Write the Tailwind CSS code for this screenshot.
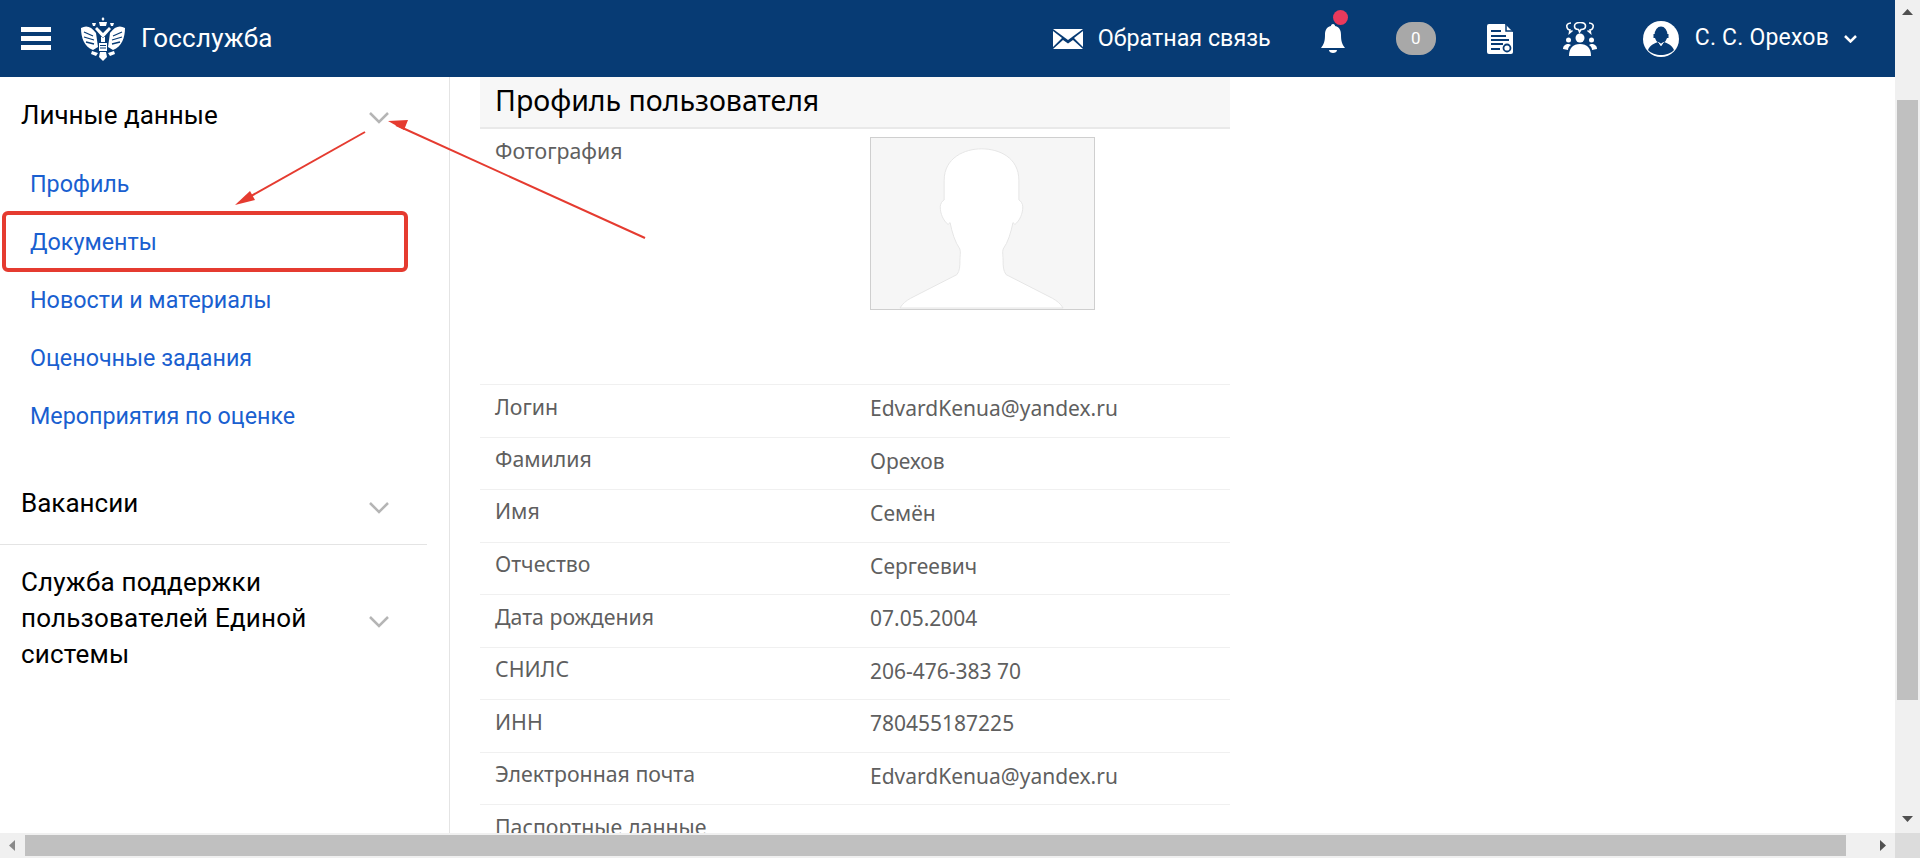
<!DOCTYPE html>
<html lang="ru">
<head>
  <meta charset="UTF-8" />
  <title>Госслужба - Профиль пользователя</title>
  <script src="https://cdn.jsdelivr.net/npm/@tailwindcss/browser@4"></script>
</head>
<body class="bg-white h-screen overflow-hidden font-['Roboto',sans-serif]">
  <div class="relative h-[858px] flex flex-col">
    <div class="flex flex-1 min-h-0">
      <div class="flex-1 flex flex-col min-w-0">
        <!-- header -->
        <header class="h-[77px] shrink-0 bg-[#073b74] flex items-center text-white">
          <div class="ml-[21px] w-[30px] flex flex-col gap-[4px]">
            <span class="block h-[5px] bg-white"></span>
            <span class="block h-[5px] bg-white"></span>
            <span class="block h-[5px] bg-white"></span>
          </div>
          <svg class="ml-[30px] w-[44px] h-[44px]" viewBox="0 0 44 44">
            <path d="M15 16C10 9 5 8 0 11c0 9 3 19 12 22l5-3zM29 16c5-7 10-8 15-5 0 9-3 19-12 22l-5-3z" fill="white"/>
            <path d="M3 15l9 4M3 20l10 3M5 25l8 2M41 15l-9 4M41 20l-10 3M39 25l-8 2" stroke="#073b74" stroke-width="1.300" fill="none"/>
            <path d="M14 12l8 9 8-9-2-2-6 6-6-6zM20 20h4v5h-4z" fill="white"/>
            <path d="M22 0l1.500 2-1.500 2-1.500-2zM18 5h8l-1 4h-6zM11 6h4l-1 3h-2zM29 6h4l-1 3h-2z" fill="white"/>
            <path d="M18 26h8v8h-8z" fill="white"/>
            <path d="M19 28.500h6M19 31h6" stroke="#073b74" stroke-width="1"/>
            <path d="M19 35h6l1 5-4 4-4-4zM11 34l6 2-2 3-5-2zM33 34l-6 2 2 3 5-2z" fill="white"/>
          </svg>
          <span class="ml-[16px] text-[26px] tracking-[0.2px]">Госслужба</span>

          <div class="ml-auto flex items-center">
            <svg class="w-[30px] h-[20px]" viewBox="0 0 30 20">
              <path d="M0 0h30L15 11z" fill="white"/>
              <path d="M0 2v16l9-9zM30 2v16l-9-9z" fill="white"/>
              <path d="M0 20l10-9 5 3.500 5-3.500 10 9z" fill="white"/>
            </svg>
            <span class="ml-[15px] text-[23.300px] w-[172px] whitespace-nowrap">Обратная связь</span>

            <div class="relative ml-[51px] w-[24px] h-[30px]">
              <svg class="w-[24px] h-[30px]" viewBox="0 0 24 30" fill="white">
                <path d="M12 0c1.500 0 2 1 2 2 5 1 6 5 6 9 0 6 1 9 4 13H0c3-4 4-7 4-13 0-4 1-8 6-9 0-1 .5-2 2-2z"/>
                <path d="M8 26h8c0 2-2 3-4 3s-4-1-4-3z"/>
              </svg>
              <span class="absolute -top-[14px] left-[12px] w-[15px] h-[15px] rounded-full bg-[#ea3a5c]"></span>
            </div>

            <span class="ml-[51px] w-[40px] h-[33px] rounded-[16px] bg-[#a8a8a8] flex items-center justify-center text-[17px]">0</span>

            <svg class="ml-[51px] w-[26px] h-[30px]" viewBox="0 0 26 30">
              <path d="M2 0h16l8 8v20a2 2 0 0 1-2 2H2a2 2 0 0 1-2-2V2a2 2 0 0 1 2-2z" fill="white"/>
              <path d="M19 0v7h7" fill="none" stroke="#073b74" stroke-width="1.500"/>
              <path d="M4 7h10M4 12h15M4 16h18M4 20h12M4 25h9" stroke="#073b74" stroke-width="1.800"/>
              <circle cx="20" cy="24" r="3.500" fill="white" stroke="#073b74" stroke-width="1.800"/>
            </svg>

            <svg class="ml-[50px] w-[34px] h-[34px]" viewBox="0 0 34 34" fill="white">
              <circle cx="17" cy="16" r="4.500"/>
              <path d="M6 34c0-8 4-12 11-12s11 4 11 12z"/>
              <circle cx="5.500" cy="18" r="2.500"/>
              <circle cx="28.500" cy="18" r="2.500"/>
              <path d="M0 27c0-3 2-5 6-5l2 1c-2 1-3 3-3 5zM34 27c0-3-2-5-6-5l-2 1c2 1 3 3 3 5z"/>
              <path d="M11.500 4c0-2.500 3-3.500 5.500-3.500s5.500 1 5.500 3.500-2.500 3.500-4.500 3.500l-1.500 2.500-1-2.500c-2 0-4-1-4-3.500z" fill="none" stroke="white" stroke-width="1.600"/>
              <path d="M8 1C5 1 3 3 4 5.500 4.500 7 6 8 7 8l-.5 3 3-2.500M26 1c3 0 5 2 4 4.500C29.500 7 28 8 27 8l.5 3-3-2.500" fill="none" stroke="white" stroke-width="1.600"/>
            </svg>

            <svg class="ml-[46px] w-[36px] h-[36px]" viewBox="0 0 36 36">
              <circle cx="18" cy="18" r="18" fill="white"/>
              <ellipse cx="18" cy="14" rx="6.500" ry="8.500" fill="#073b74"/>
              <path d="M10.500 13h1.500v4h-1.500zM24 13h1.500v4H24z" fill="#073b74"/>
              <path d="M5 29c2-5 7-7 10-8l3 4 3-4c3 1 8 3 10 8-3 3.500-8 5-13 5S8 32.500 5 29z" fill="#073b74"/>
              <path d="M15.500 21l2.500 3.500 2.500-3.500" fill="none" stroke="white" stroke-width="1"/>
            </svg>

            <span class="ml-[16px] text-[23px] tracking-[0.2px] whitespace-nowrap">С. С. Орехов</span>
            <svg class="ml-[15px] mr-[38px] w-[13px] h-[8px]" viewBox="0 0 13 8" fill="none" stroke="white" stroke-width="2.500">
              <path d="M1 1l5.500 5.500L12 1"/>
            </svg>
          </div>
        </header>

        <div class="flex flex-1 min-h-0">
          <!-- sidebar -->
          <aside class="w-[450px] shrink-0 border-r border-[#e4e4e4] overflow-hidden">
            <div class="w-[427px]">
              <div class="h-[76px] pl-[21px] pr-[38px] flex items-center justify-between text-[26px] text-black">
                <span>Личные данные</span>
                <svg class="w-[20px] h-[12px] mt-[6px]" viewBox="0 0 20 12" fill="none" stroke="#b5b5b5" stroke-width="2.500"><path d="M1 1l9 9 9-9"/></svg>
              </div>
              <nav class="flex flex-col pl-[30px] pt-[2px] pb-[20px] text-[23.300px] text-[#1a5fd0]">
                <a class="h-[58px] flex items-center">Профиль</a>
                <a class="h-[58px] flex items-center">Документы</a>
                <a class="h-[58px] flex items-center">Новости и материалы</a>
                <a class="h-[58px] flex items-center">Оценочные задания</a>
                <a class="h-[58px] flex items-center">Мероприятия по оценке</a>
              </nav>
              <div class="h-[80px] pl-[21px] pr-[38px] flex items-center justify-between text-[26px] text-black border-b border-[#e4e4e4]">
                <span class="mb-[2px]">Вакансии</span>
                <svg class="w-[20px] h-[12px] mt-[6px]" viewBox="0 0 20 12" fill="none" stroke="#b5b5b5" stroke-width="2.500"><path d="M1 1l9 9 9-9"/></svg>
              </div>
              <div class="pt-[19px] pl-[21px] pr-[38px] flex items-center justify-between text-[26px] leading-[36px] text-black tracking-[0.2px]">
                <span class="w-[320px]">Служба поддержки пользователей Единой системы</span>
                <svg class="w-[20px] h-[12px] mt-[8px]" viewBox="0 0 20 12" fill="none" stroke="#b5b5b5" stroke-width="2.500"><path d="M1 1l9 9 9-9"/></svg>
              </div>
            </div>
          </aside>

          <!-- content -->
          <main class="flex-1 min-w-0 overflow-hidden pl-[30px] font-['Noto_Sans',sans-serif]">
            <div class="w-[750px]">
              <h1 class="h-[52px] px-[15px] pb-[4px] flex items-center bg-[#f7f7f7] border-b-2 border-[#e9e9e9] text-[28.500px] text-black">Профиль пользователя</h1>
              <div class="h-[256px] flex border-b border-[#f0f0f0]">
                <div class="w-[390px] pl-[15px] pt-[6px] text-[21.300px] text-[#5f5f5f]">Фотография</div>
                <svg class="mt-[8px] w-[225px] h-[173px] bg-[#f6f6f6] border border-[#cfcfcf]" viewBox="0 0 226 174" fill="white" stroke="#e6e6e6" stroke-width="1">
                  <path d="M29 173C32 168 35 166 40 163L87 139C90 135 90 130 90 125C90 120 91 117 90 113C85 106 82 96 80 86L78 88C73 84 70 77 70 70C70 67 72 64 74 63L74 43C74 20 95 11 112 11C130 11 150 20 150 43L150 63C152 64 154 67 154 70C154 77 151 84 146 88L144 86C142 96 139 106 134 113C133 117 134 120 134 125C134 130 134 135 137 139L184 163C189 166 192 168 195 173Z"/>
                </svg>
              </div>
              <dl>
                <div class="h-[53px] flex border-b border-[#f0f0f0]"><dt class="w-[390px] pl-[15px] pt-[6px] text-[21.300px] text-[#5f5f5f]">Логин</dt><dd class="pt-[8px] text-[21px] text-[#5f5f5f]">EdvardKenua@yandex.ru</dd></div>
                <div class="h-[52px] flex border-b border-[#f0f0f0]"><dt class="w-[390px] pl-[15px] pt-[5px] text-[21.300px] text-[#5f5f5f]">Фамилия</dt><dd class="pt-[8px] text-[21px] text-[#5f5f5f]">Орехов</dd></div>
                <div class="h-[53px] flex border-b border-[#f0f0f0]"><dt class="w-[390px] pl-[15px] pt-[5px] text-[21.300px] text-[#5f5f5f]">Имя</dt><dd class="pt-[8px] text-[21px] text-[#5f5f5f]">Семён</dd></div>
                <div class="h-[52px] flex border-b border-[#f0f0f0]"><dt class="w-[390px] pl-[15px] pt-[5px] text-[21.300px] text-[#5f5f5f]">Отчество</dt><dd class="pt-[8px] text-[21px] text-[#5f5f5f]">Сергеевич</dd></div>
                <div class="h-[53px] flex border-b border-[#f0f0f0]"><dt class="w-[390px] pl-[15px] pt-[6px] text-[21.300px] text-[#5f5f5f]">Дата рождения</dt><dd class="pt-[8px] text-[21px] text-[#5f5f5f]">07.05.2004</dd></div>
                <div class="h-[52px] flex border-b border-[#f0f0f0]"><dt class="w-[390px] pl-[15px] pt-[5px] text-[21.300px] text-[#5f5f5f]">СНИЛС</dt><dd class="pt-[8px] text-[21px] text-[#5f5f5f]">206-476-383 70</dd></div>
                <div class="h-[53px] flex border-b border-[#f0f0f0]"><dt class="w-[390px] pl-[15px] pt-[6px] text-[21.300px] text-[#5f5f5f]">ИНН</dt><dd class="pt-[8px] text-[21px] text-[#5f5f5f]">780455187225</dd></div>
                <div class="h-[52px] flex border-b border-[#f0f0f0]"><dt class="w-[390px] pl-[15px] pt-[5px] text-[21.300px] text-[#5f5f5f]">Электронная почта</dt><dd class="pt-[8px] text-[21px] text-[#5f5f5f]">EdvardKenua@yandex.ru</dd></div>
                <div class="h-[53px] flex"><dt class="w-[390px] pl-[15px] pt-[6px] text-[21.300px] text-[#5f5f5f]">Паспортные данные</dt></div>
              </dl>
            </div>
          </main>
        </div>
      </div>

      <!-- vertical scrollbar -->
      <div class="w-[25px] shrink-0 bg-[#f0f0f0] flex flex-col items-center">
        <svg class="mt-[9px] w-[11px] h-[6px]" viewBox="0 0 11 6" fill="#505050"><path d="M5.500 0L11 6H0z"/></svg>
        <div class="mt-[85px] w-[21px] h-[600px] bg-[#c0c0c0]"></div>
        <svg class="mt-auto mb-[11px] w-[11px] h-[6px]" viewBox="0 0 11 6" fill="#505050"><path d="M0 0h11L5.500 6z"/></svg>
      </div>
    </div>

    <!-- horizontal scrollbar -->
    <div class="h-[25px] shrink-0 bg-[#f0f0f0] flex items-center">
      <svg class="ml-[9px] w-[6px] h-[11px]" viewBox="0 0 6 11" fill="#8a8a8a"><path d="M6 0v11L0 5.500z"/></svg>
      <div class="ml-[10px] w-[1821px] h-[21px] bg-[#c0c0c0]"></div>
      <svg class="ml-[34px] w-[6px] h-[11px]" viewBox="0 0 6 11" fill="#505050"><path d="M0 0l6 5.500L0 11z"/></svg>
      <div class="ml-auto w-[25px] h-[25px] bg-[#dcdcdc]"></div>
    </div>

    <!-- annotation drawn over the page -->
    <div class="absolute left-[2px] top-[211px] w-[406px] h-[61px] rounded-[6px] border-[4px] border-[#e53b30]"></div>
    <svg class="absolute left-0 top-0 w-[1920px] h-[858px] pointer-events-none" viewBox="0 0 1920 858" fill="#e53b30" stroke="none">
      <path d="M365 132L244 200" stroke="#e53b30" stroke-width="2" fill="none"/>
      <path d="M235 205l15-14 5 9z"/>
      <path d="M645 238L396 125" stroke="#e53b30" stroke-width="2" fill="none"/>
      <path d="M388 121l20-1-4 10z"/>
    </svg>
  </div>
</body>
</html>
